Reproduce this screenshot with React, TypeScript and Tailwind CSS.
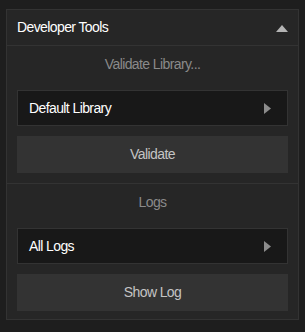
export default function App() {
  return (
    <div className="min-h-[332px] w-[305px] bg-[#1e1e1e] pt-[9px] font-['Liberation_Sans',Arial,sans-serif] tracking-[-0.6px]">
      <div className="mx-[6px] border border-[#333] bg-[#262626]">
        <div className="flex h-[36px] items-center justify-between border-b border-[#333] pl-[10px] pr-[10px]">
          <span className="text-[14px] text-white">Developer Tools</span>
          <svg width="12" height="7" viewBox="0 0 12 7" className="mt-[1px]">
            <polygon points="6,0 12,7 0,7" fill="#b4b4b4" />
          </svg>
        </div>
        <Section label="Validate Library..." select="Default Library" action="Validate" pad="pb-[10px]" />
        <div className="border-t border-[#333]" />
        <Section label="Logs" select="All Logs" action="Show Log" pad="pb-[8px]" />
      </div>
    </div>
  );
}

function Section({ label, select, action, pad }: { label: string; select: string; action: string; pad: string }) {
  return (
    <div className={`px-[10px] ${pad}`}>
      <div className="flex h-[44px] justify-center pt-[9px] text-[14px] leading-[18px] text-[#8a8a8a]">{label}</div>
      <div className="flex h-[36px] items-center justify-between border border-[#333] bg-[#181818] pl-[11px] pr-[16px]">
        <span className="text-[14px] text-white">{select}</span>
        <svg width="7" height="11" viewBox="0 0 7 11">
          <polygon points="0,0 7,5.5 0,11" fill="#8c8c8c" />
        </svg>
      </div>
      <div className="mt-[10px] flex h-[37px] items-center justify-center bg-[#333] text-[14px] text-[#c4c4c4]">
        {action}
      </div>
    </div>
  );
}
